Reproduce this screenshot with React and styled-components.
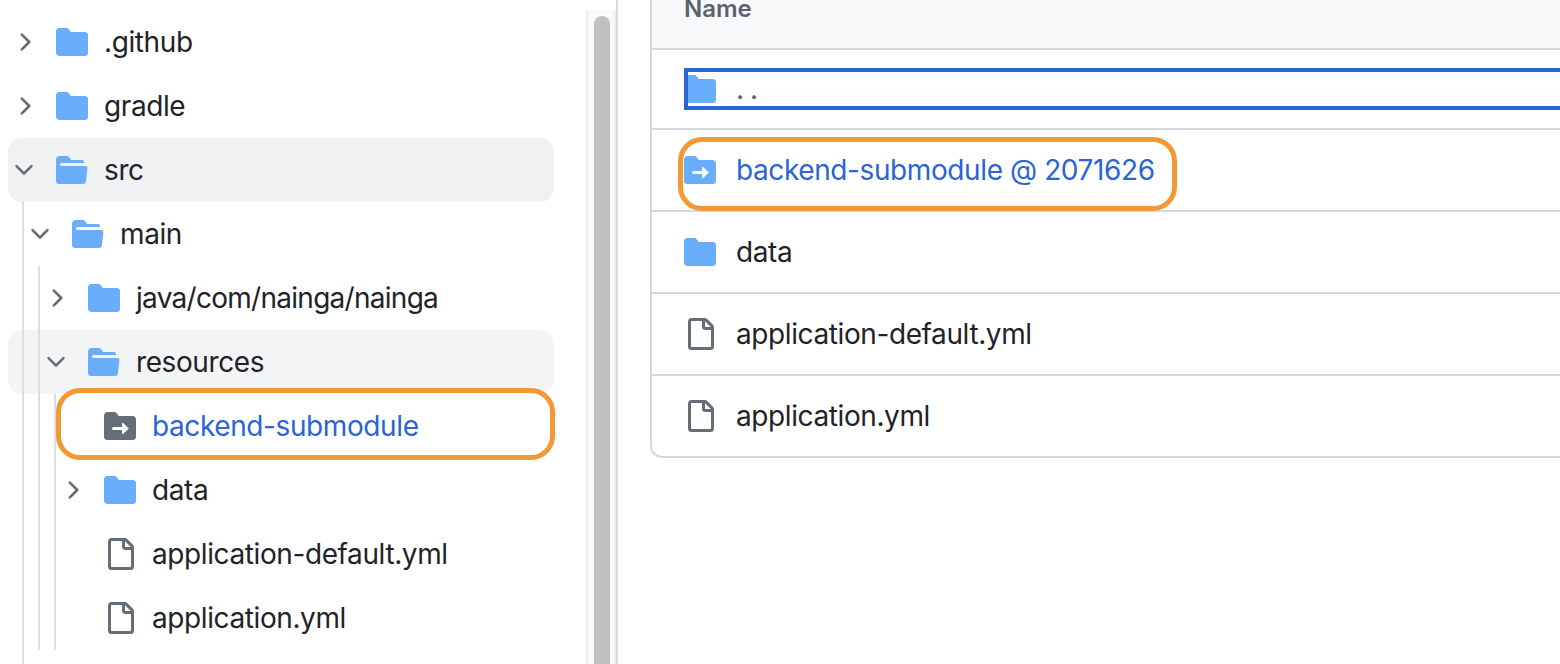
import React from 'react';
import styled, { createGlobalStyle } from 'styled-components';

const GlobalStyle = createGlobalStyle`
  html, body {
    margin: 0;
    height: 664px;
    overflow: hidden;
    background: #fff;
  }
  body {
    font-family: Inter, "Liberation Sans", sans-serif;
    font-size: 28px;
    letter-spacing: -0.4px;
    color: #1f2328;
  }
`;

const Page = styled.div`
  display: flex;
  width: 1560px;
  height: 664px;
  overflow: hidden;
`;

const Sidebar = styled.aside`
  display: flex;
  flex: 0 0 618px;
  height: 664px;
  border-right: 2px solid #d8dce1;
  box-sizing: border-box;
`;

const Tree = styled.div`
  flex: 0 0 586px;
  padding: 10px 32px 0 8px;
  box-sizing: border-box;
`;

const Group = styled.div`
  position: relative;
  padding-bottom: ${(p) => p.$tail || 0}px;

  &::before {
    content: '';
    position: absolute;
    top: 0;
    bottom: 0;
    left: ${(p) => 14 + p.$level * 16}px;
    width: 2px;
    background: #dcdee1;
    z-index: 1;
  }
`;

const Row = styled.div`
  position: relative;
  display: flex;
  align-items: center;
  height: 64px;
  padding-left: ${(p) => 2 + p.$level * 16}px;
  border-radius: 14px;
  background: ${(p) => p.$bg || 'transparent'};
`;

const ChevronSlot = styled.span`
  display: flex;
  flex: 0 0 28px;
  justify-content: center;
  margin-right: 18px;
  color: #656d76;
`;

const Icon = styled.svg`
  display: block;
  flex: none;
  fill: currentColor;
`;

const FolderBox = styled.span`
  display: flex;
  flex: none;
  margin-right: ${(p) => p.$gap}px;
  color: ${(p) => p.$color || '#69adfd'};
`;

const Label = styled.span`
  white-space: nowrap;
  line-height: 34px;
  letter-spacing: ${(p) => (p.$tight ? '-0.72px' : 'inherit')};
  color: ${(p) => (p.$link ? '#2b64d4' : '#1f2328')};
`;

const Callout = styled.span`
  position: absolute;
  top: ${(p) => p.$top}px;
  right: ${(p) => p.$right}px;
  bottom: ${(p) => p.$bottom}px;
  left: ${(p) => p.$left}px;
  border: 5px solid #f29835;
  border-radius: 24px;
  pointer-events: none;
`;

const ScrollTrack = styled.div`
  flex: 0 0 30px;
  box-sizing: border-box;
  margin-top: 10px;
  padding: 6px 4px 0 6px;
  background: #fafafa;
  border-left: 2px solid #eeeeee;
  border-right: 2px solid #eeeeee;
`;

const ScrollThumb = styled.div`
  width: 16px;
  height: 900px;
  border-radius: 8px;
  background: #c1c1c1;
`;

const Main = styled.main`
  flex: 1;
  min-width: 0;
  padding-left: 32px;
`;

const Table = styled.section`
  width: 1000px;
  border-left: 2px solid #d3d8de;
  border-bottom: 2px solid #d3d8de;
  border-bottom-left-radius: 12px;
`;

const Header = styled.div`
  height: 48px;
  padding-left: 32px;
  background: #f6f8fa;
  border-bottom: 2px solid #d3d8de;
  font-size: 24px;
  font-weight: 600;
  letter-spacing: 0;
  line-height: 18px;
  color: #59636e;
`;

const TableRow = styled.div`
  display: flex;
  align-items: center;
  box-sizing: border-box;
  height: ${(p) => p.$height || 80}px;
  padding-left: 32px;
  border-bottom: ${(p) => (p.$last ? 'none' : '2px solid #d3d8de')};
`;

const FocusLink = styled.a`
  display: flex;
  align-items: center;
  flex: 1;
  height: 42px;
  outline: 4px solid #2b64d4;
  outline-offset: -4px;
`;

const ParentDots = styled.span`
  color: #59636e;
  letter-spacing: 6px;
`;

const NameCell = styled.span`
  position: relative;
  display: inline-flex;
  align-items: center;
`;

const paths = {
  right:
    'M6.22 3.22a.75.75 0 0 1 1.06 0l4.25 4.25a.75.75 0 0 1 0 1.06l-4.25 4.25a.751.751 0 0 1-1.042-.018.751.751 0 0 1-.018-1.042L9.94 8 6.22 4.28a.75.75 0 0 1 0-1.06Z',
  down: 'M12.78 5.22a.749.749 0 0 1 0 1.06l-4.25 4.25a.749.749 0 0 1-1.06 0L3.22 6.28a.749.749 0 1 1 1.06-1.06L8 8.939l3.72-3.719a.749.749 0 0 1 1.06 0Z',
  folder:
    'M1.75 1A1.75 1.75 0 0 0 0 2.75v10.5C0 14.216.784 15 1.75 15h12.5A1.75 1.75 0 0 0 16 13.25v-8.5A1.75 1.75 0 0 0 14.25 3H7.5a.25.25 0 0 1-.2-.1l-.9-1.2C6.07 1.26 5.55 1 5 1H1.75Z',
  open: 'M.513 1.513A1.75 1.75 0 0 1 1.75 1h3.5c.55 0 1.07.26 1.4.7l.9 1.2a.25.25 0 0 0 .2.1H13a1 1 0 0 1 1 1v.5H2.75a.75.75 0 0 0 0 1.5h11.978a1 1 0 0 1 .994 1.117L15 13.25A1.75 1.75 0 0 1 13.25 15H1.75A1.75 1.75 0 0 1 0 13.25V2.75c0-.464.184-.91.513-1.237Z',
  submodule:
    'M0 2.75C0 1.784.784 1 1.75 1H5c.55 0 1.07.26 1.4.7l.9 1.2a.25.25 0 0 0 .2.1h6.75c.966 0 1.75.784 1.75 1.75v8.5A1.75 1.75 0 0 1 14.25 15H1.75A1.75 1.75 0 0 1 0 13.25Zm9.42 9.36 2.883-2.677a.25.25 0 0 0 0-.366L9.42 6.39a.249.249 0 0 0-.42.183V8.5H4.75a.75.75 0 0 0 0 1.5H9v1.927c0 .218.26.331.42.183Z',
  file: 'M2 1.75C2 .784 2.784 0 3.75 0h6.586c.464 0 .909.184 1.237.513l2.914 2.914c.329.328.513.773.513 1.237v9.586A1.75 1.75 0 0 1 13.25 16h-9.5A1.75 1.75 0 0 1 2 14.25Zm1.75-.25a.25.25 0 0 0-.25.25v12.5c0 .138.112.25.25.25h9.5a.25.25 0 0 0 .25-.25V6h-2.75A1.75 1.75 0 0 1 9 4.25V1.5Zm6.75.062V4.25c0 .138.112.25.25.25h2.688l-.011-.013-2.914-2.914-.013-.011Z',
};

const Octicon = ({ name, size = 32 }) => (
  <Icon viewBox="0 0 16 16" width={size} height={size} aria-hidden="true">
    <path fillRule="evenodd" d={paths[name]} />
  </Icon>
);

const TreeRow = ({ level = 0, chevron, icon = 'folder', color, bg, link, tight, children, callout }) => (
  <Row $level={level} $bg={bg}>
    <ChevronSlot>{chevron ? <Octicon name={chevron} size={28} /> : <Icon width={28} height={28} />}</ChevronSlot>
    <FolderBox $gap={16} $color={color}>
      <Octicon name={icon} />
    </FolderBox>
    <Label $link={link} $tight={tight}>
      {children}
    </Label>
    {callout}
  </Row>
);

const App = () => {
  return (
    <Page>
      <GlobalStyle />
      <Sidebar>
        <Tree>
          <TreeRow chevron="right">.github</TreeRow>
          <TreeRow chevron="right">gradle</TreeRow>
          <TreeRow chevron="down" icon="open" bg="#eff1f3">
            src
          </TreeRow>
          <Group $level={0} $tail={40}>
            <TreeRow level={1} chevron="down" icon="open">
              main
            </TreeRow>
            <Group $level={1}>
              <TreeRow level={2} chevron="right" tight>
                java/com/nainga/nainga
              </TreeRow>
              <TreeRow level={2} chevron="down" icon="open" bg="#f3f4f6">
                resources
              </TreeRow>
              <Group $level={2}>
                <TreeRow
                  level={3}
                  icon="submodule"
                  color="#656d76"
                  link
                  callout={<Callout $top={-6} $right={-1} $bottom={-2} $left={48} />}
                >
                  backend-submodule
                </TreeRow>
                <TreeRow level={3} chevron="right">
                  data
                </TreeRow>
                <TreeRow level={3} icon="file" color="#656d76">
                  application-default.yml
                </TreeRow>
                <TreeRow level={3} icon="file" color="#656d76">
                  application.yml
                </TreeRow>
              </Group>
            </Group>
          </Group>
        </Tree>
        <ScrollTrack>
          <ScrollThumb />
        </ScrollTrack>
      </Sidebar>
      <Main>
        <Table>
          <Header>Name</Header>
          <TableRow $height={80}>
            <FocusLink>
              <FolderBox $gap={20}>
                <Octicon name="folder" />
              </FolderBox>
              <ParentDots>..</ParentDots>
            </FocusLink>
          </TableRow>
          <TableRow $height={82}>
            <NameCell>
              <FolderBox $gap={20}>
                <Octicon name="submodule" />
              </FolderBox>
              <Label $link>backend-submodule @ 2071626</Label>
              <Callout $top={-16} $right={-22} $bottom={-24} $left={-6} />
            </NameCell>
          </TableRow>
          <TableRow $height={82}>
            <FolderBox $gap={20}>
              <Octicon name="folder" />
            </FolderBox>
            <Label>data</Label>
          </TableRow>
          <TableRow $height={82}>
            <FolderBox $gap={20} $color="#656d76">
              <Octicon name="file" />
            </FolderBox>
            <Label>application-default.yml</Label>
          </TableRow>
          <TableRow $height={80} $last>
            <FolderBox $gap={20} $color="#656d76">
              <Octicon name="file" />
            </FolderBox>
            <Label>application.yml</Label>
          </TableRow>
        </Table>
      </Main>
    </Page>
  );
};

export default App;
